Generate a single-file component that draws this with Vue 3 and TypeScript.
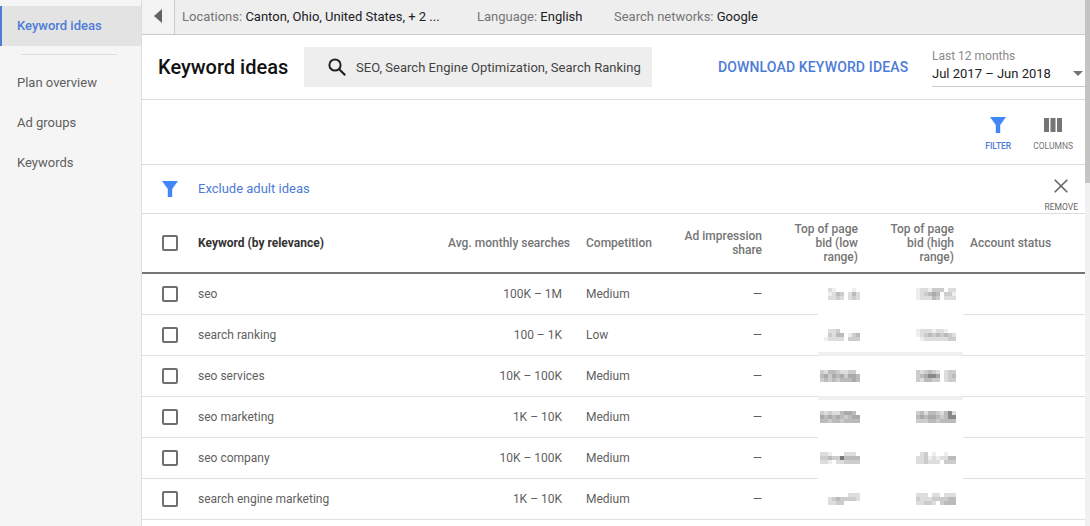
<template>
  <div class="page">
    <nav class="side">
      <a class="side-item active">Keyword ideas</a>
      <div class="side-sep"></div>
      <a v-for="item in sideItems" :key="item" class="side-item">{{ item }}</a>
    </nav>

    <main class="main">
      <div class="topbar">
        <button class="collapse">
          <svg width="8" height="14" viewBox="0 0 8 14"><path d="M8 0v14L0 7z" fill="#5f6368" /></svg>
        </button>
        <div class="summary">
          <span class="sum loc"><i>Locations:</i> Canton, Ohio, United States, + 2 ...</span>
          <span class="sum lang"><i>Language:</i> English</span>
          <span class="sum"><i>Search networks:</i> Google</span>
        </div>
      </div>

      <header class="head">
        <h1>Keyword ideas</h1>
        <div class="search">
          <svg width="20" height="20" viewBox="0 0 20 20">
            <circle cx="8" cy="8" r="5.6" fill="none" stroke="#222" stroke-width="2" />
            <path d="M12.2 12.2l6 6" stroke="#222" stroke-width="2.2" fill="none" />
          </svg>
          <span>SEO, Search Engine Optimization, Search Ranking</span>
        </div>
        <a class="download">DOWNLOAD KEYWORD IDEAS</a>
        <div class="range">
          <div class="range-label">Last 12 months</div>
          <div class="range-value">
            Jul 2017 – Jun 2018
            <svg width="10" height="5" viewBox="0 0 10 5"><path d="M0 0h10L5 5z" fill="#757575" /></svg>
          </div>
        </div>
      </header>

      <div class="tools">
        <div class="tool on">
          <svg width="18" height="18" viewBox="0 0 18 18"><path d="M1 1h16l-5.8 8v8H6.8V9z" fill="#4285f4" /></svg>
          <span>FILTER</span>
        </div>
        <div class="tool">
          <svg width="18" height="18" viewBox="0 0 18 18"><path d="M0 2h5v14H0zM6.5 2h5v14h-5zM13 2h5v14h-5z" fill="#757575" /></svg>
          <span>COLUMNS</span>
        </div>
      </div>

      <div class="filters">
        <svg width="18" height="18" viewBox="0 0 18 18"><path d="M1 1h16l-5.8 8v8H6.8V9z" fill="#4285f4" /></svg>
        <a>Exclude adult ideas</a>
        <div class="remove">
          <svg width="14" height="14" viewBox="0 0 14 14"><path d="M.7.7l12.6 12.6M13.3.7L.7 13.3" stroke="#666" stroke-width="1.6" fill="none" /></svg>
          <span>REMOVE</span>
        </div>
      </div>

      <div class="table">
        <div class="row head-row">
          <div class="check"><span class="box"></span></div>
          <div class="kw-head">Keyword (by relevance)</div>
          <div class="num avg-head">Avg. monthly searches</div>
          <div class="comp">Competition</div>
          <div class="num">Ad impression<br />share</div>
          <div class="num">Top of page<br />bid (low<br />range)</div>
          <div class="num">Top of page<br />bid (high<br />range)</div>
          <div class="status">Account status</div>
        </div>
        <div v-for="r in rows" :key="r.keyword" class="row">
          <div class="check"><span class="box"></span></div>
          <div>{{ r.keyword }}</div>
          <div class="num avg">{{ r.searches }}</div>
          <div class="comp">{{ r.competition }}</div>
          <div class="num">—</div>
          <div></div>
          <div></div>
          <div></div>
        </div>

        <!-- redacted bids, sits over the table rows -->
        <div class="redact">
          <div class="band band-a"></div>
          <div class="band band-b"></div>
          <div v-for="(pair, i) in bids" :key="i" class="redact-row">
            <div v-for="(mosaic, j) in pair" :key="j" class="mosaic">
              <template v-for="(line, k) in mosaic" :key="k">
                <i v-for="(c, l) in line" :key="l" :style="{ background: '#' + c + c + c }"></i>
              </template>
            </div>
          </div>
        </div>
      </div>
    </main>

    <div class="scrollbar"><div class="thumb"></div></div>
  </div>
</template>

<script setup lang="ts">
const sideItems = ['Plan overview', 'Ad groups', 'Keywords'];

const rows = [
  { keyword: 'seo', searches: '100K – 1M', competition: 'Medium' },
  { keyword: 'search ranking', searches: '100 – 1K', competition: 'Low' },
  { keyword: 'seo services', searches: '10K – 100K', competition: 'Medium' },
  { keyword: 'seo marketing', searches: '1K – 10K', competition: 'Medium' },
  { keyword: 'seo company', searches: '10K – 100K', competition: 'Medium' },
  { keyword: 'search engine marketing', searches: '1K – 10K', competition: 'Medium' },
];

// gray level per 4px cell, one hex digit each
const bids: string[][][] = [
  [
    ['ffdeffffef', 'ffedbcfdbd', 'ffddcdfdcd'],
    ['eddecccfdd', 'edcbabfcce', 'edddbcfddd'],
  ],
  [
    ['ffddcfffff', 'ffcdbbfecb', 'feddddfccc'],
    ['edddeddeff', 'edcbcbcbcd', 'feddddddcc'],
  ],
  [
    ['cdbbcddccf', 'bacabacaab', 'cbcbcbbbab'],
    ['cdcbcdfdcc', 'cba88afdcb', 'cdbbccfdcc'],
  ],
  [
    ['cdcddbaabf', 'abababcbaa', 'bbcbbcbbbb'],
    ['cbdbbcdb8d', 'babaabcb88', 'cccbbcbbbb'],
  ],
  [
    ['ddefffdddf', 'ccbcc7bbbb', 'ddefddcccc'],
    ['fdcfeffeff', 'ddcededdbb', 'ddcdddfccc'],
  ],
  [
    ['fffffffddd', 'ffdcbccccd', 'ffddccffff'],
    ['dddfddfddd', 'cdddccccbb', 'ddccdfcbbb'],
  ],
];
</script>

<style scoped>
.page {
  display: flex;
  width: 1090px;
  height: 526px;
  overflow: hidden;
  font-family: Roboto, "Liberation Sans", sans-serif;
  font-size: 12px;
  color: #616161;
  background: #fff;
}

.side {
  flex: 0 0 142px;
  box-sizing: border-box;
  padding-top: 6px;
  background: #f5f5f5;
  border-right: 1px solid #ddd;
}
.side-item {
  display: block;
  height: 40px;
  line-height: 40px;
  padding-left: 17px;
  font-size: 13px;
  color: #5f5f5f;
}
.side-item.active {
  box-sizing: border-box;
  padding-left: 15px;
  border-left: 2px solid #4d7cd6;
  background: #e3e3e3;
  color: #4d7cd6;
  font-weight: 500;
}
.side-sep {
  height: 1px;
  margin: 8px 24px 8px 21px;
  background: #ddd;
}

.main {
  flex: 0 0 943px;
  min-width: 0;
}

.topbar {
  display: flex;
  height: 35px;
  box-sizing: border-box;
  background: #eee;
  border-bottom: 1px solid #ccc;
}
.collapse {
  width: 33px;
  padding: 0 0 0 12px;
  border: 0;
  border-right: 1px solid #ccc;
  background: #f3f3f3;
  text-align: left;
}
.summary {
  display: flex;
  align-items: center;
  padding: 0 0 2px 7px;
  font-size: 13px;
  color: #202124;
  white-space: nowrap;
}
.sum i {
  font-style: normal;
  color: #757575;
}
.loc {
  width: 295px;
}
.lang {
  width: 137px;
}

.head {
  display: flex;
  align-items: center;
  height: 65px;
  box-sizing: border-box;
  padding-left: 16px;
  border-bottom: 1px solid #ddd;
}
.head h1 {
  margin: 0;
  width: 146px;
  font-size: 20px;
  font-weight: 500;
  color: #111;
}
.search {
  display: flex;
  align-items: center;
  gap: 9px;
  width: 348px;
  height: 40px;
  box-sizing: border-box;
  padding-left: 23px;
  background: #eee;
  font-size: 13px;
  letter-spacing: 0.02px;
  color: #444;
  white-space: nowrap;
}
.download {
  margin-left: 66px;
  width: 214px;
  font-size: 14px;
  font-weight: 500;
  letter-spacing: 0.14px;
  color: #4d7cd6;
  white-space: nowrap;
}
.range {
  flex: 1;
  align-self: flex-start;
  padding-top: 13px;
}
.range-label {
  color: #8a8a8a;
  height: 16px;
  line-height: 16px;
}
.range-value {
  display: flex;
  align-items: center;
  justify-content: space-between;
  height: 19px;
  padding: 0 2px 3px 0;
  border-bottom: 1px solid #ccc;
  font-size: 13px;
  color: #222;
}

.tools {
  display: flex;
  justify-content: flex-end;
  gap: 22px;
  height: 65px;
  box-sizing: border-box;
  padding: 16px 12px 0 0;
  border-bottom: 1px solid #ddd;
}
.tool {
  display: flex;
  flex-direction: column;
  align-items: center;
  gap: 7px;
  font-size: 8.5px;
  color: #757575;
}
.tool.on {
  color: #4d7cd6;
  font-weight: 500;
}

.filters {
  display: flex;
  align-items: center;
  height: 49px;
  box-sizing: border-box;
  padding: 0 0 2px 19px;
  border-bottom: 1px solid #ddd;
  font-size: 13px;
  color: #4d7cd6;
}
.filters svg:first-child {
  margin-top: 2px;
}
.filters a {
  margin-left: 19px;
  flex: 1;
}
.remove {
  display: flex;
  flex-direction: column;
  align-items: center;
  gap: 9px;
  margin: 13px 7px 0 0;
  font-size: 8.5px;
  color: #666;
}

.table {
  position: relative;
}
.row {
  display: grid;
  grid-template-columns: 56px 242px 138px 82px 110px 96px 96px 123px;
  align-items: center;
  height: 41px;
  box-sizing: border-box;
  border-bottom: 1px solid #e0e0e0;
  color: #5f5f5f;
}
.row > .num {
  text-align: right;
  padding-right: 8px;
}
.row > .comp {
  padding-left: 8px;
}
.row > .avg {
  padding-right: 16px;
}
.head-row {
  height: 60px;
  border-bottom: 2px solid #757575;
  line-height: 14px;
}
.kw-head {
  font-weight: 700;
  color: #333;
}
.head-row .num,
.head-row .comp,
.status {
  font-weight: 500;
  color: #757575;
}
.status {
  padding-left: 8px;
}
.check {
  padding-left: 20px;
  height: 16px;
}
.box {
  display: block;
  width: 16px;
  height: 16px;
  box-sizing: border-box;
  border: 2px solid #6f6f6f;
  border-radius: 2px;
}

.redact {
  position: absolute;
  left: 676px;
  top: 60px;
  width: 145px;
  height: 245px;
  background: #fff;
}
.redact-row {
  position: relative;
  display: flex;
  gap: 56px;
  height: 41px;
  padding: 14px 0 0 2px;
  box-sizing: border-box;
}
.band {
  position: absolute;
  left: 0;
  right: 0;
  height: 4px;
  background: #f0f0f0;
}
.band-a {
  top: 78px;
}
.band-b {
  top: 122px;
}
.mosaic {
  display: grid;
  grid-template-columns: repeat(10, 4px);
  grid-auto-rows: 4px;
}
.mosaic i {
  display: block;
}

.scrollbar {
  flex: 0 0 5px;
  background: #f1f1f1;
}
.thumb {
  height: 183px;
  background: #c4c4c4;
}
</style>

<style>
html,
body {
  margin: 0;
  overflow: hidden;
}
</style>
